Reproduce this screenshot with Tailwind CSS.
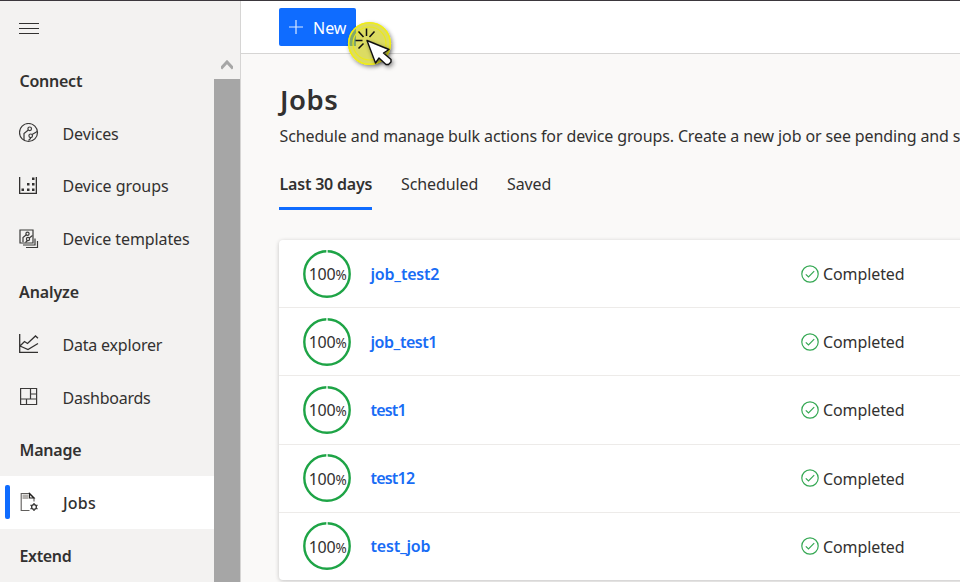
<!DOCTYPE html>
<html lang="en">
<head>
<meta charset="utf-8">
<title>Jobs</title>
<script src="https://cdn.jsdelivr.net/npm/@tailwindcss/browser@4"></script>
</head>
<body class="h-[582px] w-[960px] overflow-hidden bg-[#faf9f8] font-['Noto_Sans',sans-serif] text-[16px] text-[#323130]">
<div class="flex h-[582px] w-[960px] overflow-hidden border-t border-[#3b373d]">
  <aside class="flex w-[241px] shrink-0 flex-col border-r border-[#d6d5d4] bg-[#f3f2f1]">
    <div class="h-[53px] shrink-0 pl-[19px] pt-[22px]">
      <svg width="20" height="12" viewBox="0 0 20 12" fill="none" stroke="#323130"><path d="M0 .5h20M0 5.5h20M0 10.5h20"/></svg>
    </div>
    <div class="flex min-h-0 grow">
      <nav class="w-[214px] shrink-0 leading-[24px] whitespace-nowrap">
        <div class="flex h-[52.75px] items-center pl-[19.5px] pt-px font-semibold"><span class="tracking-[-0.25px]">Connect</span></div>
        <div class="flex h-[52.75px] items-center pl-[19px]">
          <svg class="mr-[23.5px]" width="20" height="20" viewBox="0 0 20 20" fill="none" stroke="#3b3a39" stroke-width="1.2"><circle cx="9.5" cy="9.5" r="9"/><circle cx="10.700" cy="5.800" r="1.800"/><circle cx="11.700" cy="12.800" r="1.800"/><path d="M9.300 7 5 10.500V17M13.100 11.500 18.200 8.500M11.500 14.600V15.500L9.500 17.500"/></svg>
          <span class="pt-[2px] tracking-[-0.12px]">Devices</span></div>
        <div class="flex h-[52.75px] items-center pl-[19px]">
          <svg class="mr-[23.5px]" width="20" height="20" viewBox="0 0 20 20" fill="#323130"><path d="M0 1h1.300v15.700h15.400V1H18v17H0zM13 1.500h2.500v2.500h-2.500zM8 7h2.500v2.500H8zM13 7h2.500v2.500h-2.500zM2.500 12.500h2.500v2.500h-2.500zM8 12.500h2.500v2.500H8zM13 12.500h2.500v2.500h-2.500z"/></svg>
          <span class="pt-px tracking-[-0.05px]">Device groups</span></div>
        <div class="flex h-[52.75px] items-center pl-[19px]">
          <svg class="mr-[23.5px]" width="20" height="20" viewBox="0 0 20 20" fill="none" stroke="#3b3a39" stroke-width="1.200"><path d="M1 1h13v13H1zM16 9.500V16H4M18.500 12v6.500H7" /><circle cx="8.500" cy="4.700" r="1.600"/><circle cx="9" cy="10" r="1.600"/><path d="M7.300 5.700 4 8.500V13M10.300 9 13.500 6.500M8.500 11.500 6.500 13.500"/></svg>
          <span class="pt-px tracking-[-0.1px]">Device templates</span></div>
        <div class="flex h-[52.75px] items-center pl-[19px] pt-px font-semibold"><span class="tracking-[-0.1px]">Analyze</span></div>
        <div class="flex h-[52.75px] items-center pl-[19px]">
          <svg class="mr-[23.5px]" width="20" height="20" viewBox="0 0 20 20" fill="none" stroke="#323130" stroke-width="1.300"><path d="M.7 0v18.300H19M1 12 5.500 7.500 8.500 9.500 16.500 2 19 4.200M1 12l8 3.500L19 9.500"/></svg>
          <span class="pt-[2px] tracking-[-0.2px]">Data explorer</span></div>
        <div class="flex h-[52.75px] items-center pl-[19px]">
          <svg class="mr-[23.5px]" width="20" height="20" viewBox="0 0 20 20" fill="none" stroke="#3b3a39" stroke-width="1.200"><path d="M1.600 1.500h16v16h-16zM11.500 1.500V12M1.600 12h16M11.500 7h6M7.500 12v5.500"/></svg>
          <span class="pt-[2px] tracking-[-0.25px]">Dashboards</span></div>
        <div class="flex h-[52.75px] items-center pl-[19.5px] pt-px font-semibold"><span class="tracking-[-0.2px]">Manage</span></div>
        <div class="flex h-[52.75px] items-center bg-white pl-[5px]">
          <span class="mr-[10px] h-[34px] w-[5px] rounded-[2px] bg-[#0f6cff]"></span>
          <svg class="mr-[24px]" width="19" height="20" viewBox="0 0 19 20" fill="none" stroke="#605e5c" stroke-width="1.100"><path d="M9.500 18.500H1.200V1.500h8.300L14 6v3.500"/><path d="M9.500 1.500V6H14z" stroke="#201f1e" stroke-width="1.200"/><path d="M2.500 2.500h6V7h-6z" fill="#b3b0ad" stroke="none"/><circle cx="14" cy="15" r="2.400" stroke="#323130" stroke-width="1.300"/><path d="M14 11v1.300M14 17.700V19M10.500 13l1.200.7M16.300 16.300l1.200.7M10.500 17l1.200-.7M16.300 13.700l1.200-.7" stroke="#323130" stroke-width="1.300"/></svg>
          <span class="pt-[2px] font-medium tracking-[0.2px]">Jobs</span></div>
        <div class="flex h-[52.75px] items-center pl-[19.5px] pt-px font-semibold"><span class="tracking-[-0.35px]">Extend</span></div>
      </nav>
      <div class="flex w-[26px] flex-col">
        <div class="flex h-[25px] shrink-0 justify-center pt-[6px]"><svg width="12" height="10" viewBox="0 0 12 10" fill="none" stroke="#a6a6a6" stroke-width="3"><path d="M0 8.600 6 2l6 6.600"/></svg></div>
        <div class="grow bg-[#a6a6a6]"></div>
      </div>
    </div>
  </aside>

  <main class="flex w-[719px] flex-col whitespace-nowrap">
    <header class="relative h-[53px] shrink-0 border-b border-[#d6d5d4] bg-white pl-[38px] pt-[7px]">
      <button class="flex h-[38px] w-[77px] items-center rounded-[2px] bg-[#0f6cff] pl-[10px] text-white">
        <svg class="mr-[10px] shrink-0" width="14" height="14" viewBox="0 0 14 14" stroke="#fff"><path d="M7 0v14M0 7h14" stroke-opacity=".85" stroke-width="1.200"/></svg>
        <span class="pt-[2px]">New</span>
      </button>
      <svg class="absolute left-[101px] top-[13px] z-10" width="60" height="60" viewBox="0 0 60 60">
        <defs><filter id="sh" x="-30%" y="-30%" width="160%" height="160%"><feDropShadow dx="1.500" dy="2" stdDeviation="2" flood-opacity=".45"/></filter></defs>
        <g filter="url(#sh)"><circle cx="27.500" cy="29.500" r="21.500" fill="#dcdc62"/></g>
        <path d="M14 12.800V32H6.200A21.500 21.500 0 0 1 14 12.800" fill="#82a86c"/>
        <circle cx="27.500" cy="29.500" r="20.800" fill="none" stroke="#f1ee12" stroke-width="1.600"/>
        <circle cx="27.500" cy="29.500" r="16.500" fill="none" stroke="#ece91a" stroke-width="1.200"/>
        <path d="M24.500 14.500v7.500M16.500 17.500l5 5.500M32.500 17.500l-5 5.500M13.500 26.500h7M21.500 29.500l-5 5" stroke="#111" stroke-width="1.500" fill="none"/>
        <g filter="url(#sh)"><path d="M25 26.500 47 35.500 41.500 39 49 45.500V48L46.500 50.500H44L37 44 33.500 49z" fill="#fff" stroke="#111" stroke-width="1.400" stroke-linejoin="round"/></g>
      </svg>
    </header>
    <section class="flex grow flex-col pl-[38px]">
      <h1 class="mt-[27px] h-[38px] pl-px text-[27.5px] font-semibold leading-[38px] tracking-[0.5px]">Jobs</h1>
      <p class="mt-[5px] h-[24px] pl-[0.5px] leading-[24px] tracking-[-0.125px]">Schedule and manage bulk actions for device groups. Create a new job or see pending and s</p>
      <div class="mt-[14px] flex h-[48px] gap-[29px] leading-[44px]">
        <div class="w-[93px] border-b-[3px] border-[#0f6cff] pl-[0.5px] font-semibold tracking-[-0.2px]">Last 30 days</div>
        <div class="w-[77px] tracking-[-0.1px]">Scheduled</div>
        <div class="tracking-[-0.1px]">Saved</div>
      </div>
      <div id="jobs" class="mt-[30px] h-[340px] w-[720px] shrink-0 rounded-[4px] bg-white shadow-[0_1px_4px_rgba(0,0,0,0.22)]"></div>
    </section>
  </main>
</div>
<template id="row">
  <div class="flex h-[68.2px] items-center border-b border-[#edebe9] pl-[24px] last:h-[67.2px] last:border-b-0">
    <div class="mr-[19px] grid h-[48px] w-[48px] shrink-0 place-items-center">
      <svg class="col-start-1 row-start-1" width="48" height="48" viewBox="0 0 48 48" fill="none"><circle cx="24" cy="24" r="22.700" stroke="#1ea446" stroke-width="2.400"/><path d="M24 0v3" stroke="#fff" stroke-width="1.300"/></svg>
      <span class="col-start-1 row-start-1 ml-[1px] mt-[2px] leading-[20px] tracking-[-0.25px]">100<span class="text-[13.5px]">%</span></span>
    </div>
    <div class="w-[431px] pl-[0.5px] font-semibold text-[#186cf5]"><span class="name"></span></div>
    <svg class="mr-[4px] shrink-0" width="18" height="18" viewBox="0 0 18 18" fill="none" stroke="#35a853" stroke-width="1.200"><circle cx="9" cy="9" r="8.200"/><path d="m4.800 9.300 2.700 2.700 5.700-5.800"/></svg>
    <span class="pt-px tracking-[-0.1px]">Completed</span>
  </div>
</template>
<script>
const rows = [
  ['job_test2', 'tracking-[-0.2px]'],
  ['job_test1', 'tracking-[-0.45px]'],
  ['test1', 'tracking-[-0.8px]'],
  ['test12', 'tracking-[-0.8px]'],
  ['test_job', 'tracking-[-0.2px]'],
];
for (const [name, tracking] of rows) {
  const row = document.getElementById('row').content.cloneNode(true);
  const label = row.querySelector('.name');
  label.textContent = name;
  label.classList.add(tracking);
  document.getElementById('jobs').append(row);
}
</script>
</body>
</html>
